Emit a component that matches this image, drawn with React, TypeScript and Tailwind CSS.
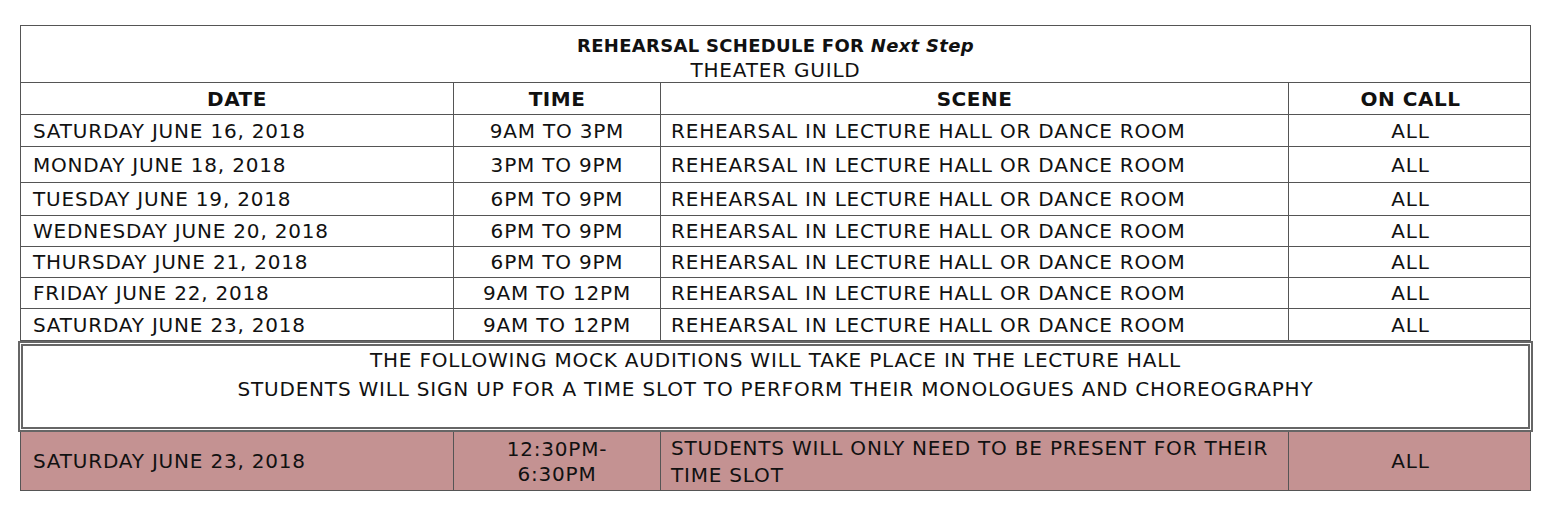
const rows = [
  { date: "SATURDAY JUNE 16, 2018", time: "9AM TO 3PM", h: "h-[32px]" },
  { date: "MONDAY JUNE 18, 2018", time: "3PM TO 9PM", h: "h-[36px]" },
  { date: "TUESDAY JUNE 19, 2018", time: "6PM TO 9PM", h: "h-[33px]" },
  { date: "WEDNESDAY JUNE 20, 2018", time: "6PM TO 9PM", h: "h-[31px]" },
  { date: "THURSDAY JUNE 21, 2018", time: "6PM TO 9PM", h: "h-[31px]" },
  { date: "FRIDAY JUNE 22, 2018", time: "9AM TO 12PM", h: "h-[31px]" },
  { date: "SATURDAY JUNE 23, 2018", time: "9AM TO 12PM", h: "h-[31px]" },
];

const cols = "grid grid-cols-[433px_207px_628px_243px]";
const cell = "border-r border-[#555] flex items-center leading-none";

export default function App() {
  return (
    <div
      className="bg-white w-[1550px] h-[509px] pt-[25px] text-[#111] text-[20px] tracking-[0.8px]"
      style={{ fontFamily: '"DejaVu Sans", sans-serif' }}
    >
      <div className="mx-[20px] w-[1511px]">
        <div className="border border-[#555]">
          <div className="h-[57px] border-b border-[#555] flex flex-col items-center pt-[7px] leading-[25px]">
            <div className="font-bold text-[18px] tracking-[0.3px]">
              REHEARSAL SCHEDULE FOR <span className="italic">Next Step</span>
            </div>
            <div>THEATER GUILD</div>
          </div>

          <div className={`${cols} h-[32px] border-b border-[#555] font-bold tracking-[0.5px]`}>
            <div className={`${cell} justify-center`}>DATE</div>
            <div className={`${cell} justify-center`}>TIME</div>
            <div className={`${cell} justify-center`}>SCENE</div>
            <div className="flex items-center justify-center leading-none">ON CALL</div>
          </div>

          {rows.map((r, i) => (
            <div
              key={i}
              className={`${cols} ${r.h} ${i < rows.length - 1 ? "border-b border-[#555]" : ""}`}
            >
              <div className={`${cell} pl-[12px]`}>{r.date}</div>
              <div className={`${cell} justify-center`}>{r.time}</div>
              <div className={`${cell} pl-[10px]`}>REHEARSAL IN LECTURE HALL OR DANCE ROOM</div>
              <div className="flex items-center justify-center leading-none">ALL</div>
            </div>
          ))}
        </div>

        <div className="-mx-[2px] h-[91px] border-[5px] border-double border-[#666] flex flex-col items-center leading-[29px]">
          <div>THE FOLLOWING MOCK AUDITIONS WILL TAKE PLACE IN THE LECTURE HALL</div>
          <div>STUDENTS WILL SIGN UP FOR A TIME SLOT TO PERFORM THEIR MONOLOGUES AND CHOREOGRAPHY</div>
        </div>

        <div className={`${cols} h-[59px] bg-[#c49292] border border-t-0 border-[#555]`}>
          <div className={`${cell} pl-[12px]`}>SATURDAY JUNE 23, 2018</div>
          <div className="border-r border-[#555] flex flex-col items-center pt-[5px] leading-[25px]">
            <div>12:30PM-</div>
            <div>6:30PM</div>
          </div>
          <div className="border-r border-[#555] pl-[10px] leading-[27px] pt-[3px]">
            STUDENTS WILL ONLY NEED TO BE PRESENT FOR THEIR
            <br />
            TIME SLOT
          </div>
          <div className="flex items-center justify-center leading-none">ALL</div>
        </div>
      </div>
    </div>
  );
}
